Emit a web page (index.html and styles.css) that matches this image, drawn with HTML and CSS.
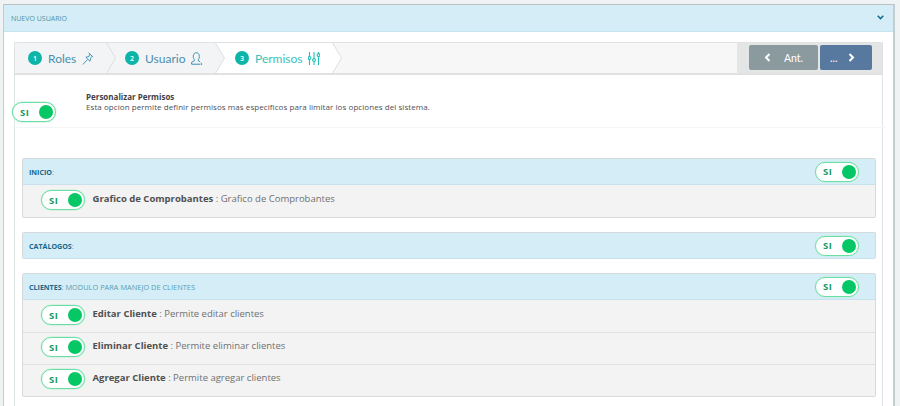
FILE: index.html
```html
<!DOCTYPE html>
<html lang="es">
<head>
<meta charset="utf-8">
<title>Nuevo usuario</title>
<link rel="stylesheet" href="styles.css">
</head>
<body>
<main class="panel">
  <header class="panel-head">
    <span class="panel-title">NUEVO USUARIO</span>
    <svg class="chev" width="7" height="5" viewBox="0 0 7 5"><path d="M.7 .8L3.500 3.600 6.300 .8" fill="none" stroke="#0e6f8f" stroke-width="1.500"/></svg>
  </header>
  <div class="panel-body">
    <nav class="wizard">
      <div class="steps">
        <div class="step step-one">
          <span class="num">1</span><span class="label">Roles</span>
          <svg class="ico" width="12" height="13" viewBox="0 0 12 13" fill="none" stroke="#3a8db5" stroke-width=".9"><path d="M6.500 .8l4.700 4.200M7.800 1.900L7 4.500 3.800 5.200l4.200 4 .9-3.400 1.300-1.600M5.500 7.500L.8 12.500"/></svg>
          <svg class="arrow" width="10" height="32" viewBox="0 0 10 32"><path d="M0 0l9.500 16L0 32z" fill="#f3f4f5"/><path d="M0 0l9.500 16L0 32" fill="none" stroke="#dcdfe0"/></svg>
        </div>
        <div class="step step-two">
          <span class="num">2</span><span class="label">Usuario</span>
          <svg class="ico" width="12" height="13" viewBox="0 0 12 13" fill="none" stroke="#3a8db5" stroke-width="1"><path d="M3.300 7.500C2.300 6.300 2.200 4.800 2.300 3.800 2.500 1.800 3.800 .7 5.300 .7s2.800 1.100 3 3.100c.1 1 0 2.500-1 3.700v1.300l1.700 .8"/><path d="M3.300 7.500v1.300L.6 10.300v1.900h8.400"/><path d="M9.500 10.800l1.600 1.400-1.600 .7" stroke-width=".9"/></svg>
          <svg class="arrow" width="10" height="32" viewBox="0 0 10 32"><path d="M0 0l9.500 16L0 32z" fill="#f3f4f5"/><path d="M0 0l9.500 16L0 32" fill="none" stroke="#dcdfe0"/></svg>
        </div>
        <div class="step step-three">
          <span class="num">3</span><span class="label">Permisos</span>
          <svg class="ico" width="12" height="13" viewBox="0 0 12 13" fill="none" stroke="#22c0b4" stroke-width="1.100"><path d="M1.500 0v13M6 0v13M10.500 0v13"/><circle cx="1.500" cy="6" r="1.400" fill="#fff"/><circle cx="6" cy="8" r="1.400" fill="#fff"/><circle cx="10.500" cy="3" r="1.400" fill="#fff"/></svg>
          <svg class="arrow" width="10" height="32" viewBox="0 0 10 32"><path d="M0 0l9.500 16L0 32z" fill="#fff"/><path d="M0 0l9.500 16L0 32" fill="none" stroke="#dcdfe0"/></svg>
        </div>
      </div>
      <div class="actions">
        <button class="btn btn-prev" type="button">
          <svg width="7" height="9" viewBox="0 0 7 9"><path d="M5.500 1L2 4.500 5.500 8" fill="none" stroke="#fff" stroke-width="2"/></svg>
          <span>Ant.</span>
        </button>
        <button class="btn btn-next" type="button">
          <span>...</span>
          <svg width="7" height="9" viewBox="0 0 7 9"><path d="M1.500 1L5 4.500 1.500 8" fill="none" stroke="#fff" stroke-width="2"/></svg>
        </button>
      </div>
    </nav>
    <section class="intro">
      <span class="toggle toggle-intro"><span class="si">SI</span><span class="knob"></span></span>
      <div class="intro-text">
        <strong>Personalizar Permisos</strong>
        <p>Esta opcion permite definir permisos mas especificos para limitar los opciones del sistema.</p>
      </div>
    </section>
    <div class="groups">
      <section class="group group-open">
        <header class="group-head">
          <span class="group-title"><b>INICIO</b>:</span>
          <span class="toggle"><span class="si">SI</span><span class="knob"></span></span>
        </header>
        <div class="row">
          <span class="toggle"><span class="si">SI</span><span class="knob"></span></span>
          <span class="row-text"><b>Grafico de Comprobantes</b> : Grafico de Comprobantes</span>
        </div>
      </section>
      <section class="group">
        <header class="group-head">
          <span class="group-title"><b>CATÁLOGOS</b>:</span>
          <span class="toggle"><span class="si">SI</span><span class="knob"></span></span>
        </header>
      </section>
      <section class="group group-open">
        <header class="group-head">
          <span class="group-title"><b>CLIENTES</b>: MODULO PARA MANEJO DE CLIENTES</span>
          <span class="toggle"><span class="si">SI</span><span class="knob"></span></span>
        </header>
        <div class="row">
          <span class="toggle"><span class="si">SI</span><span class="knob"></span></span>
          <span class="row-text"><b>Editar Cliente</b> : Permite editar clientes</span>
        </div>
        <div class="row">
          <span class="toggle"><span class="si">SI</span><span class="knob"></span></span>
          <span class="row-text"><b>Eliminar Cliente</b> : Permite eliminar clientes</span>
        </div>
        <div class="row">
          <span class="toggle"><span class="si">SI</span><span class="knob"></span></span>
          <span class="row-text"><b>Agregar Cliente</b> : Permite agregar clientes</span>
        </div>
      </section>
    </div>
  </div>
</main>
</body>
</html>
```

FILE: styles.css
```css
* { box-sizing: border-box; }
body {
  margin: 0;
  height: 406px;
  overflow: hidden;
  background: #f0f3f3;
  font-family: "Open Sans", sans-serif;
  padding: 4px 5px 0 3px;
}
.panel {
  background: #fff;
  border: 1px solid #c3cdd0;
  border-bottom: 0;
  border-top-color: #b9c2c5;
  border-right-width: 2px;
  height: 402px;
  overflow: hidden;
}
.panel-head {
  height: 27px;
  background: #d4edf6;
  border-bottom: 1px solid #c4e5f0;
  display: flex;
  align-items: center;
  justify-content: space-between;
  padding: 0 9px 0 7px;
}
.panel-title {
  font-size: 7px;
  color: #4d91a8;
}
.chev { margin-top: -2px; }
.panel-body {
  margin: 10px 10px 0 10px;
  border-left: 1px solid #dfe3e4;
  border-right: 1px solid #dfe3e4;
  height: 380px;
}
.wizard {
  margin: 0 -1px;
  height: 33px;
  display: flex;
  justify-content: space-between;
  background: #f7f7f7;
  border: 1px solid #dfe1e2;
  border-bottom: 2px solid #dfe1e2;
  border-radius: 3px 3px 0 0;
}
.steps { display: flex; }
.step {
  display: flex;
  align-items: center;
  position: relative;
  background: #f3f4f5;
  height: 30px;
}
.step-one { width: 91px; padding-left: 13px; }
.step-two { width: 109px; padding-left: 19px; }
.step-three { width: 117px; padding-left: 20px; background: #fff; }
.num {
  width: 14px;
  height: 14px;
  border-radius: 50%;
  background: #0db4a8;
  color: #fff;
  font-size: 7px;
  font-weight: 600;
  display: flex;
  align-items: center;
  justify-content: center;
  margin-right: 6px;
}
.label {
  font-family: "Lato", sans-serif;
  font-size: 12px;
  color: #4a8fb0;
  margin-right: 6px;
}
.step-three .label { color: #37c4b9; margin-right: 5px; }
.arrow {
  position: absolute;
  right: -10px;
  top: -1px;
  z-index: 1;
}
.actions {
  background: #e4e5e5;
  width: 145px;
  display: flex;
  gap: 2px;
  padding: 2px 10px 2px 12px;
}
.btn {
  height: 25px;
  border: 0;
  border-radius: 2px;
  color: #fff;
  font-family: "Lato", sans-serif;
  font-size: 10.500px;
  display: flex;
  align-items: center;
}
.btn-prev { background: #8b9a9f; width: 69px; padding: 0 15px 0 15px; justify-content: space-between; }
.btn-next { background: #57789f; width: 52px; padding: 0 17px 0 10px; justify-content: space-between; }
.toggle {
  flex: none;
  display: inline-flex;
  align-items: center;
  justify-content: space-between;
  width: 44px;
  height: 20px;
  border: 1px solid #6adfa5;
  border-radius: 10px;
  background: #fff;
  box-shadow: 0 0 0 .5px #bff0d8;
  padding: 0 2px 0 7px;
}
.si {
  font-size: 9.500px;
  font-weight: 700;
  letter-spacing: .5px;
  color: #169a63;
}
.knob {
  width: 14px;
  height: 14px;
  border-radius: 50%;
  background: #05c765;
}
.intro {
  height: 53px;
  border-bottom: 1px solid #f3f4f4;
  margin: 0 -3px;
  display: flex;
  padding-top: 17px;
}
.toggle-intro { margin-top: 10px; }
.intro-text {
  margin-left: 30px;
  font-size: 8px;
  letter-spacing: .065px;
  line-height: 10px;
  color: #4d4f55;
}
.intro-text strong { font-weight: 700; letter-spacing: 0; color: #3f4146; }
.intro-text p { margin: 0; }
.groups {
  padding: 30px 6px 0 7px;
  display: flex;
  flex-direction: column;
  gap: 14px;
}
.group {
  border: 1px solid #d5dadb;
  border-bottom-width: 0;
  border-radius: 2px;
  background: #f3f3f3;
  overflow: hidden;
}
.group-open { border-bottom-width: 1px; }
.group-head {
  height: 26px;
  background: #d4edf6;
  border-bottom: 1px solid #c7e2ec;
  display: flex;
  align-items: center;
  justify-content: space-between;
  padding: 0 16px 0 6px;
}
.group-title {
  font-size: 7.400px;
  color: #5a9db3;
}
.group-title b { font-size: 7.100px; color: #17678a; font-weight: 700; }
.row {
  height: 32px;
  padding: 4px 0 0 18px;
  display: flex;
  align-items: flex-start;
  gap: 7.500px;
}
.row + .row { box-shadow: inset 0 1px #e0e0e0; }
.row > .toggle { margin-top: 1px; }
.row-text {
  font-size: 9.500px;
  line-height: 20px;
  color: #707070;
}
.row-text b { color: #505050; font-weight: 700; }
```
